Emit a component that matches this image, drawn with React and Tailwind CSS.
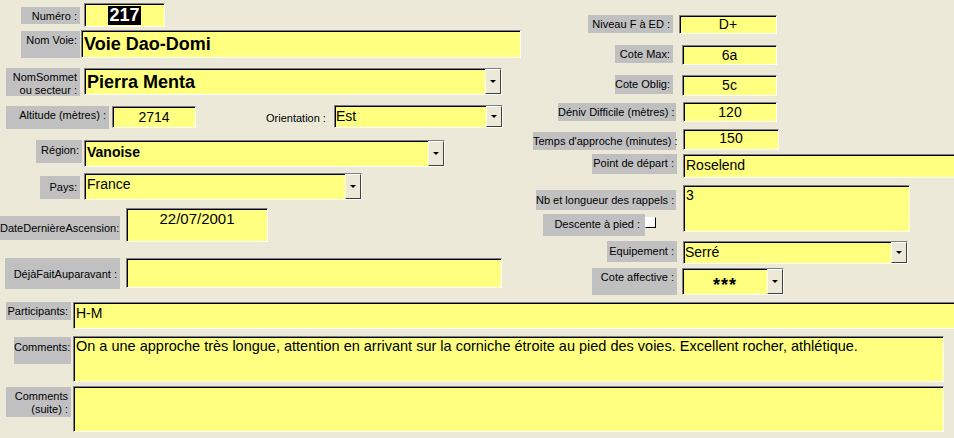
const sunken =
  "bg-[#ffff80] border border-t-[#808080] border-l-[#808080] border-r-white border-b-white shadow-[inset_1px_1px_0_#000] shrink-0 overflow-hidden";

function Label({ className = "", children }) {
  return (
    <div
      className={`bg-[#c0c0c0] text-black text-[11px] leading-[13px] text-right pr-[3px] pt-[3px] whitespace-nowrap shrink-0 ${className}`}
    >
      {children}
    </div>
  );
}

function Field({ className = "", children }) {
  return <div className={`${sunken} text-black ${className}`}>{children}</div>;
}

function Arrow() {
  return (
    <div className="w-[16px] self-stretch shrink-0 bg-[#ece9d8] border border-t-white border-l-white border-r-[#404040] border-b-[#404040] flex items-center justify-center">
      <div className="w-0 h-0 border-l-[3px] border-r-[3px] border-t-[3px] border-l-transparent border-r-transparent border-t-black" />
    </div>
  );
}

function Combo({ className = "", textClass = "", children }) {
  return (
    <div className={`${sunken} flex ${className}`}>
      <div className={`flex-1 min-w-0 text-black ${textClass}`}>{children}</div>
      <Arrow />
    </div>
  );
}

export default function App() {
  return (
    <div className="w-[954px] h-[438px] bg-[#ece9d8] overflow-hidden font-['Liberation_Sans',Arial,sans-serif]">
      {/* upper part: two columns */}
      <div className="flex h-[302px]">
        {/* left column */}
        <div className="w-[520px] shrink-0 flex flex-col">
          <div className="flex items-start mt-[3px] h-[24px]">
            <Label className="ml-[21px] mt-[4px] w-[59px] h-[17px] pt-[2px]">Numéro :</Label>
            <Field className="ml-[4px] w-[81px] h-[24px] flex items-center justify-center">
              <span className="bg-black text-white font-bold text-[18px] leading-[19px] px-[1px]">217</span>
            </Field>
          </div>

          <div className="flex items-start mt-[3px] h-[28px]">
            <Label className="ml-[21px] mt-[1px] w-[59px] h-[27px]">Nom Voie:</Label>
            <Field className="ml-[1px] w-[440px] h-[28px] pl-[2px] pt-[2px] font-bold text-[18px] leading-[22px]">
              Voie Dao-Domi
            </Field>
          </div>

          <div className="flex items-start mt-[10px] h-[28px]">
            <Label className="ml-[6px] w-[74px] h-[28px] pt-[1px] leading-[12px]">
              NomSommet
              <br />
              ou secteur :
            </Label>
            <Combo
              className="ml-[4px] w-[418px] h-[27px]"
              textClass="pl-[2px] pt-[2px] font-bold text-[18px] leading-[22px]"
            >
              Pierra Menta
            </Combo>
          </div>

          <div className="flex items-start mt-[9px] h-[24px]">
            <Label className="ml-[6px] mt-[1px] w-[103px] h-[23px]">Altitude (mètres) :</Label>
            <Field className="ml-[3px] mt-[1px] w-[84px] h-[22px] text-center text-[14px] leading-[20px]">2714</Field>
            <div className="ml-[70px] w-[68px] mt-[7px] text-[11px] leading-[13px] text-black whitespace-nowrap">
              Orientation :
            </div>
            <Combo className="w-[169px] h-[23px]" textClass="pl-[1px] text-[14px] leading-[20px]">
              Est
            </Combo>
          </div>

          <div className="flex items-start mt-[11px] h-[27px]">
            <Label className="ml-[36px] w-[46px] h-[23px] pt-[4px]">Région:</Label>
            <Combo
              className="ml-[2px] w-[361px] h-[27px]"
              textClass="pl-[2px] pt-[2px] font-bold text-[14px] leading-[18px]"
            >
              Vanoise
            </Combo>
          </div>

          <div className="flex items-start mt-[6px] h-[27px]">
            <Label className="ml-[40px] mt-[3px] w-[40px] h-[23px] pt-[5px]">Pays:</Label>
            <Combo className="ml-[4px] w-[278px] h-[27px]" textClass="pl-[2px] text-[14px] leading-[20px]">
              France
            </Combo>
          </div>

          <div className="flex items-start mt-[8px] h-[34px]">
            <Label className="mt-[8px] w-[120px] h-[24px] pt-[6px] pr-[2px]">DateDernièreAscension:</Label>
            <Field className="ml-[6px] w-[142px] h-[34px] text-center text-[15px] leading-[18px] pt-[1px]">
              22/07/2001
            </Field>
          </div>

          <div className="flex items-start mt-[16px] h-[31px]">
            <Label className="ml-[5px] w-[115px] h-[31px] pt-[10px]">DéjàFaitAuparavant :</Label>
            <Field className="ml-[6px] w-[376px] h-[30px]" />
          </div>
        </div>

        {/* right column */}
        <div className="flex-1 min-w-0 flex flex-col overflow-hidden">
          <div className="flex items-start mt-[15px] h-[19px]">
            <Label className="ml-[68px] w-[85px] h-[18px] pt-[2px]">Niveau F à ED :</Label>
            <Field className="ml-[6px] w-[98px] h-[19px] text-center text-[14px] leading-[17px]">D+</Field>
          </div>

          <div className="flex items-start mt-[11px] h-[20px]">
            <Label className="ml-[95px] w-[58px] h-[18px] pt-[2px]">Cote Max:</Label>
            <Field className="ml-[9px] w-[95px] h-[20px] text-center text-[14px] leading-[18px]">6a</Field>
          </div>

          <div className="flex items-start mt-[10px] h-[21px]">
            <Label className="ml-[95px] w-[58px] h-[19px] pt-[2px]">Cote Oblig:</Label>
            <Field className="ml-[9px] w-[95px] h-[21px] text-center text-[14px] leading-[19px]">5c</Field>
          </div>

          <div className="flex items-start mt-[6px] h-[20px]">
            <Label className="ml-[38px] mt-[1px] w-[118px] h-[18px] pt-[2px]">Déniv Difficile (mètres) :</Label>
            <Field className="ml-[7px] w-[94px] h-[20px] text-center text-[14px] leading-[18px]">120</Field>
          </div>

          <div className="flex items-start mt-[7px] h-[21px]">
            <Label className="ml-[13px] mt-[3px] w-[143px] h-[18px] pt-[2px]">Temps d'approche (minutes) :</Label>
            <Field className="ml-[7px] w-[96px] h-[21px] text-center text-[14px] leading-[17px]">150</Field>
          </div>

          <div className="flex items-start mt-[4px] h-[24px]">
            <Label className="ml-[72px] w-[85px] h-[20px] pt-[3px]">Point de départ :</Label>
            <Field className="ml-[6px] w-[290px] h-[24px] pl-[2px] text-[14px] leading-[20px]">Roselend</Field>
          </div>

          <div className="flex items-start mt-[7px] h-[51px]">
            <div className="w-[163px] shrink-0 flex flex-col">
              <Label className="ml-[16px] mt-[5px] w-[140px] h-[20px] pt-[4px]">Nb et longueur des rappels :</Label>
              <div className="flex items-start mt-[4px]">
                <Label className="ml-[23px] w-[102px] h-[22px] pt-[4px] pr-[5px]">Descente à pied :</Label>
                <div className="mt-[3px] w-[11px] h-[11px] bg-white border border-t-white border-l-white border-r-black border-b-black" />
              </div>
            </div>
            <Field className="w-[227px] h-[47px] pl-[2px] text-[14px] leading-[18px]">3</Field>
          </div>

          <div className="flex items-start mt-[5px] h-[23px]">
            <Label className="ml-[87px] w-[70px] h-[21px] pt-[4px]">Equipement :</Label>
            <Combo className="ml-[6px] w-[225px] h-[23px]" textClass="pl-[1px] text-[14px] leading-[20px]">
              Serré
            </Combo>
          </div>

          <div className="flex items-start mt-[4px] h-[27px]">
            <Label className="ml-[72px] w-[85px] h-[27px] pt-[2px]">Cote affective :</Label>
            <Combo
              className="ml-[5px] w-[102px] h-[27px]"
              textClass="text-center font-bold text-[18px] leading-[22px] tracking-[1px] pt-[5px]"
            >
              ***
            </Combo>
          </div>
        </div>
      </div>

      {/* lower part: full-width fields */}
      <div className="flex flex-col">
        <div className="flex items-start h-[27px]">
          <Label className="ml-[6px] w-[65px] h-[18px] pt-[2px] pr-[1px]">Participants:</Label>
          <Field className="ml-[2px] w-[890px] h-[27px] pl-[2px] text-[14px] leading-[20px]">H-M</Field>
        </div>

        <div className="flex items-start mt-[7px] h-[46px]">
          <Label className="ml-[14px] mt-[1px] w-[57px] h-[27px] pt-[4px] pr-[1px]">Comments:</Label>
          <Field className="ml-[2px] w-[871px] h-[46px] pl-[2px] pt-[1px] text-[14.5px] leading-[17px]">
            On a une approche très longue, attention en arrivant sur la corniche étroite au pied des voies. Excellent
            rocher, athlétique.
          </Field>
        </div>

        <div className="flex items-start mt-[4px] h-[46px]">
          <Label className="ml-[6px] mt-[1px] w-[65px] h-[30px] pt-[2px] pr-[1px] leading-[13px]">
            Comments
            <br />
            (suite) :
          </Label>
          <Field className="ml-[2px] w-[871px] h-[46px]" />
        </div>
      </div>
    </div>
  );
}
